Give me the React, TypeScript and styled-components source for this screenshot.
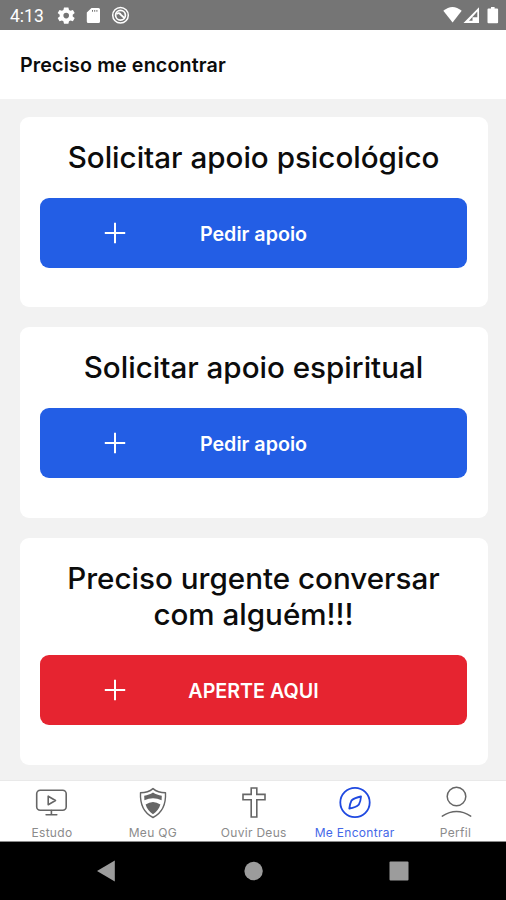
import React from "react";
import styled, { createGlobalStyle } from "styled-components";

const GlobalStyle = createGlobalStyle`
  * { box-sizing: border-box; }
  body { margin: 0; background: #000; font-family: Inter, sans-serif; }
`;

const Screen = styled.div`
  width: 506px;
  height: 900px;
  display: flex;
  flex-direction: column;
  overflow: hidden;
  background: #f2f2f2;
`;

const StatusBar = styled.div`
  height: 30px;
  flex: none;
  display: flex;
  justify-content: space-between;
  background: #757575;
  color: #fff;
`;

const Clock = styled.span`
  width: 48px;
  padding-left: 10px;
  font: 400 17.5px/32px Roboto, sans-serif;
`;

const StatusGroup = styled.div`
  display: flex;
  svg { display: block; }
`;

const Header = styled.header`
  height: 69px;
  flex: none;
  padding-left: 20px;
  background: #fff;
`;

const HeaderTitle = styled.h1`
  margin: 0;
  font-size: 19.7px;
  font-weight: 600;
  line-height: 71px;
  letter-spacing: 0.13px;
  color: #0c0c0c;
`;

const Content = styled.main`
  flex: 1;
  display: flex;
  flex-direction: column;
  gap: 20px;
  padding: 17.5px 18px 0 20px;
`;

const Card = styled.section<{ $height: number }>`
  height: ${(p) => p.$height}px;
  flex: none;
  padding: 22.5px 21px 0 20px;
  border-radius: 9px;
  background: #fff;
`;

const CardTitle = styled.h2`
  margin: 0 0 23px;
  font-size: 29.6px;
  font-weight: 500;
  line-height: 36px;
  text-align: center;
  white-space: pre-line;
  color: #0c0c0c;
`;

const ActionButton = styled.button<{ $urgent?: boolean }>`
  width: 427px;
  height: 70px;
  display: grid;
  grid-template-columns: 150px 127px 150px;
  align-items: center;
  justify-items: center;
  padding: 0;
  border: 0;
  border-radius: 9px;
  background: ${(p) => (p.$urgent ? "#e62430" : "#235ee5")};
  color: #fff;
  font: 600 19.7px/24px Inter, sans-serif;
  white-space: nowrap;
  svg { display: block; }
`;

const ButtonLabel = styled.span`
  padding-top: 2px;
`;

const TabBar = styled.nav`
  height: 62px;
  flex: none;
  display: grid;
  grid-template-columns: repeat(5, 1fr);
  padding-left: 1.5px;
  border-top: 1px solid #e9e9e9;
  border-bottom: 1px solid #8a8a8a;
  background: #fff;
`;

const Tab = styled.a<{ $active?: boolean }>`
  display: flex;
  flex-direction: column;
  align-items: center;
  padding-top: 4px;
  color: ${(p) => (p.$active ? "#1f49e0" : "#666")};
  svg { display: block; }
`;

const TabLabel = styled.span<{ $active?: boolean }>`
  margin-top: 4px;
  font-size: 12px;
  line-height: 16px;
  letter-spacing: 0.3px;
  white-space: nowrap;
  color: ${(p) => (p.$active ? "#4468e8" : "#8b8b8b")};
`;

const SystemNav = styled.div`
  height: 58px;
  flex: none;
  display: flex;
  align-items: center;
  justify-content: center;
  background: #000;
`;

const PlusIcon = () => (
  <svg width="22" height="22" viewBox="0 0 22 22" stroke="#fff" strokeWidth="2">
    <path d="M11 .8v20.400M.8 11h20.400" />
  </svg>
);

const StatusLeftIcons = () => (
  <svg width="84" height="30" viewBox="48 0 84 30" fill="#fff">
    <path
      fillRule="evenodd"
      d="M64 7.500h4.400l.6 2.500 1.500.8 2.400-.9 1.800 3.200-2 1.700v1.600l2 1.700-1.800 3.200-2.400-.9-1.500.8-.6 2.500H64l-.6-2.500-1.500-.8-2.400.9-1.800-3.200 2-1.700v-1.600l-2-1.700 1.800-3.200 2.400.9 1.500-.8zM66.200 12.800a2.800 2.800 0 1 0 0 5.600 2.800 2.800 0 0 0 0-5.600z"
    />
    <path fillRule="evenodd" d="M91.500 8h7q1.500 0 1.500 1.500v12q0 1.500-1.500 1.500H88.300q-1.500 0-1.500-1.500v-9zM92 10v1.700h1V10zM94.200 10v1.700h1V10zM96.400 10v1.700h1V10z" />
    <g fill="none" stroke="#fff">
      <circle cx="120.500" cy="15.300" r="7.800" strokeWidth="1.500" />
      <circle cx="120.500" cy="15.300" r="4.900" strokeWidth="1.700" />
      <path d="M116.500 14q3-2 4.500 1l4 3.500" strokeWidth="1.800" />
    </g>
  </svg>
);

const StatusRightIcons = () => (
  <svg width="66" height="30" viewBox="440 0 66 30" fill="#fff">
    <path d="M443.300 10.800q9.200-7.600 18.400 0L452.600 22.500z" />
    <path fillRule="evenodd" d="M463.500 23L479 7.300V23zM477.300 11.500L469 20.800h3.500v-3.600h4.800z" />
    <path d="M488.500 8.500h2.500V7h3.600v1.500h2.500q1 0 1 1v12.700q0 1-1 1h-8.600q-1 0-1-1V9.500q0-1 1-1z" />
  </svg>
);

const tabIconProps = {
  width: 36,
  height: 36,
  viewBox: "0 0 36 36",
  fill: "none",
  stroke: "currentColor",
  strokeWidth: 1.6,
  strokeLinejoin: "round" as const,
  strokeLinecap: "round" as const,
};

const MonitorIcon = () => (
  <svg {...tabIconProps}>
    <rect x="2.700" y="5.300" width="29.500" height="20" rx="3.500" />
    <path d="M14.200 11.200v8.600l7.300-4.300zM17.400 25.500v3.500M12.100 29.700h10.700" />
  </svg>
);

const ShieldIcon = () => (
  <svg {...tabIconProps} strokeWidth={1.400}>
    <path d="M18 3.600c3.500 3 8 4.200 12.500 4.200.5 10.500-2 19.500-12.500 24.700C7.500 27.300 5 18.300 5.500 7.800 10 7.800 14.500 6.600 18 3.600z" />
    <path
      fill="currentColor"
      stroke="none"
      d="M18 7.500c2.700 1.800 5.500 2.800 8.800 3.200l-.2 4.500q-8.600-4-17.200 0l-.2-4.500c3.300-.4 6.100-1.400 8.800-3.200zM10.600 19.500q7.400-5.200 14.800 0c-1.300 4.300-3.700 7.300-7.400 9.700-3.700-2.400-6.100-5.400-7.400-9.700z"
    />
  </svg>
);

const CrossIcon = () => (
  <svg {...tabIconProps} strokeLinejoin="miter">
    <path d="M15.200 3h5.600v6.400h8.200v5.300h-8.200v17.300h-5.600V14.700H7V9.400h8.200z" />
  </svg>
);

const CompassIcon = () => (
  <svg {...tabIconProps} strokeWidth={1.800}>
    <circle cx="18" cy="17.500" r="14.700" />
    <path d="M24 11.500c-.2 3-.8 5.700-2.200 8.200-2.500 2.500-6 3.400-9.500 4 .4-3 .8-5.700 2.200-8.200 2.700-2.500 6-3.400 9.500-4z" />
  </svg>
);

const PersonIcon = () => (
  <svg {...tabIconProps} strokeWidth={1.500}>
    <circle cx="18.500" cy="11.500" r="9.300" />
    <path d="M4.300 31.200q14.200-9.200 28.400 0" />
  </svg>
);

const SystemIcons = () => (
  <svg width="506" height="58" viewBox="0 842 506 58" fill="#9c9c9c">
    <path d="M97 871l17.800-10.500v21z" />
    <circle cx="253.600" cy="871" r="9.200" />
    <rect x="389.500" y="861.500" width="19" height="19" rx="1" />
  </svg>
);

const cards = [
  { title: "Solicitar apoio psicológico", action: "Pedir apoio", height: 190 },
  { title: "Solicitar apoio espiritual", action: "Pedir apoio", height: 191 },
  { title: "Preciso urgente conversar\ncom alguém!!!", action: "APERTE AQUI", height: 227, urgent: true },
];

const tabs = [
  { label: "Estudo", Icon: MonitorIcon },
  { label: "Meu QG", Icon: ShieldIcon },
  { label: "Ouvir Deus", Icon: CrossIcon },
  { label: "Me Encontrar", Icon: CompassIcon, active: true },
  { label: "Perfil", Icon: PersonIcon },
];

export default function App() {
  return (
    <>
      <GlobalStyle />
      <Screen>
        <StatusBar>
          <StatusGroup>
            <Clock>4:13</Clock>
            <StatusLeftIcons />
          </StatusGroup>
          <StatusGroup>
            <StatusRightIcons />
          </StatusGroup>
        </StatusBar>
        <Header>
          <HeaderTitle>Preciso me encontrar</HeaderTitle>
        </Header>
        <Content>
          {cards.map((card) => (
            <Card key={card.title} $height={card.height}>
              <CardTitle>{card.title}</CardTitle>
              <ActionButton $urgent={card.urgent}>
                <PlusIcon />
                <ButtonLabel>{card.action}</ButtonLabel>
              </ActionButton>
            </Card>
          ))}
        </Content>
        <TabBar>
          {tabs.map(({ label, Icon, active }) => (
            <Tab key={label} $active={active}>
              <Icon />
              <TabLabel $active={active}>{label}</TabLabel>
            </Tab>
          ))}
        </TabBar>
        <SystemNav>
          <SystemIcons />
        </SystemNav>
      </Screen>
    </>
  );
}
